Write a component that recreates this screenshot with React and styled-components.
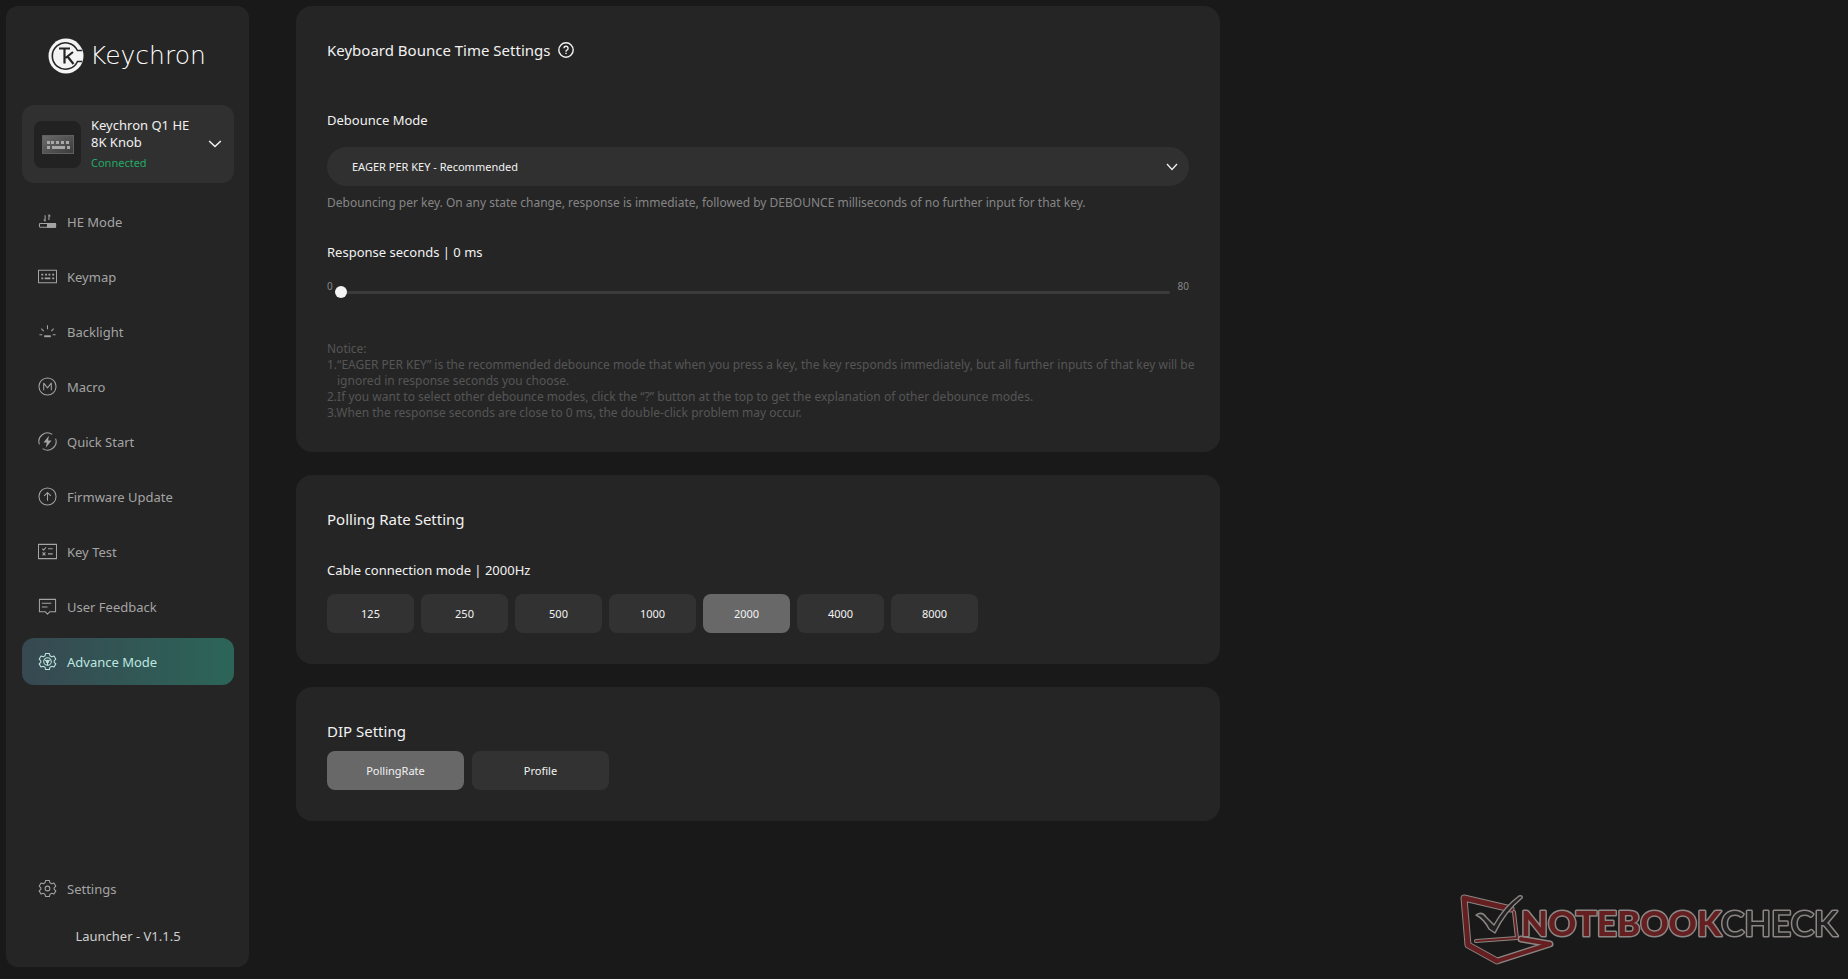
import React, { useState } from "react";
import styled, { createGlobalStyle, css } from "styled-components";

const GlobalStyle = createGlobalStyle`
  * { box-sizing: border-box; }
  body {
    margin: 0;
    background: #191919;
    color: #f2f2f2;
    font-family: "Noto Sans", "Open Sans", sans-serif;
    font-size: 14px;
    line-height: 20px;
  }
  button, select, input { font-family: inherit; }
  h2, p, ul, ol { margin: 0; padding: 0; font-weight: 400; }
`;

const Page = styled.div`
  display: flex;
  align-items: flex-start;
  min-height: 100vh;
  padding: 6px 6px 12px;
`;

const Sidebar = styled.aside`
  display: flex;
  flex-direction: column;
  flex: none;
  width: 243px;
  min-height: calc(100vh - 18px);
  padding: 0 15px 21px 16px;
  border-radius: 12px;
  background: #252525;
`;

const Brand = styled.a`
  display: flex;
  align-items: center;
  gap: 6px;
  height: 99px;
  padding-left: 26px;
  color: #ffffff;
  text-decoration: none;
`;

const Wordmark = styled.span`
  font: 200 25px/32px "DejaVu Sans", sans-serif;
`;

const Device = styled.button`
  display: flex;
  align-items: center;
  gap: 10px;
  height: 78px;
  padding: 0 12px;
  border: 0;
  border-radius: 12px;
  background: #303030;
  color: #f0f0f0;
  text-align: left;
`;

const Thumb = styled.span`
  display: flex;
  align-items: center;
  justify-content: center;
  flex: none;
  width: 47px;
  height: 47px;
  border-radius: 8px;
  background: #222222;
`;

const DeviceText = styled.span`
  display: flex;
  flex-direction: column;
  flex: 1;
  gap: 4px;
  font-size: 13px;
  line-height: 17px;
`;

const Status = styled.span`
  color: #22ab64;
  font-size: 11px;
  line-height: 16px;
`;

const Nav = styled.nav`
  display: flex;
  flex-direction: column;
  gap: 8px;
  flex: 1;
  margin-top: 15px;
`;

const NavLink = styled.a`
  display: flex;
  align-items: center;
  gap: 10px;
  height: 47px;
  padding-left: 16px;
  border-radius: 12px;
  color: #a4a4a4;
  font-size: 13px;
  text-decoration: none;
  ${(p) => p.$bottom && css`margin-top: auto;`}
  ${(p) => p.$active && css`
    background: linear-gradient(90deg, #374851, #2c6558);
    color: #bfe6e0;
  `}
`;

const Version = styled.p`
  margin-top: 14px;
  color: #cfcfcf;
  font-size: 13px;
  text-align: center;
`;

const Main = styled.main`
  display: flex;
  flex-direction: column;
  gap: 23px;
  width: 50vw;
  margin-left: 47px;
`;

const Card = styled.section`
  display: flex;
  flex-direction: column;
  padding: 32px 31px 31px;
  border-radius: 16px;
  background: #252525;
`;

const CardHead = styled.div`
  display: flex;
  align-items: center;
  gap: 8px;
  margin-bottom: ${(p) => p.$space}px;
`;

const Title = styled.h2`
  font-size: 15px;
  line-height: 24px;
`;

const HelpButton = styled.button`
  display: flex;
  padding: 0;
  border: 0;
  background: none;
  color: #f2f2f2;
`;

const Label = styled.label`
  font-size: 13px;
  line-height: 20px;
`;

const SelectBox = styled.div`
  display: grid;
  align-items: center;
  margin: 17px 0 9px;
  > * { grid-area: 1 / 1; }
  > svg { justify-self: end; margin-right: 11px; pointer-events: none; }
`;

const Select = styled.select`
  appearance: none;
  width: 100%;
  height: 39px;
  padding: 0 40px 0 25px;
  border: 0;
  border-radius: 20px;
  background: #303030;
  color: #f2f2f2;
  font-size: 11px;
`;

const Hint = styled.p`
  margin-bottom: 31px;
  color: #858585;
  font-size: 12px;
  line-height: 16px;
`;

const SliderRow = styled.div`
  display: flex;
  align-items: flex-start;
  gap: 2px;
  margin: 18px 0 37px;
  color: #858585;
  font-size: 10px;
  line-height: 12px;
`;

const SliderMax = styled.span`
  margin-left: 6px;
`;

const Slider = styled.input`
  appearance: none;
  flex: 1;
  min-width: 0;
  height: 24px;
  margin: 0;
  background: none;
  &::-webkit-slider-runnable-track {
    height: 3px;
    border-radius: 2px;
    background: #3b3b3b;
  }
  &::-webkit-slider-thumb {
    appearance: none;
    width: 12px;
    height: 12px;
    margin-top: -5px;
    border-radius: 50%;
    background: #f4f4f4;
  }
`;

const Notice = styled.div`
  margin-right: -16px;
  color: #555555;
  font-size: 12px;
  line-height: 16px;
`;

const NoticeItem = styled.p`
  padding-left: 10px;
  text-indent: -10px;
`;

const Options = styled.div`
  display: flex;
  flex-wrap: wrap;
  gap: ${(p) => p.$gap}px;
  margin-top: ${(p) => p.$space}px;
`;

const Option = styled.button`
  width: ${(p) => (p.$wide ? 137 : 87)}px;
  height: 39px;
  padding: 0;
  border: 0;
  border-radius: 8px;
  background: ${(p) => (p.$active ? "#686868" : "#323232")};
  color: #f2f2f2;
  font-size: 11px;
`;

const Watermark = styled.svg`
  position: fixed;
  right: 1px;
  bottom: 7px;
  font-family: Lato, sans-serif;
  font-size: 35px;
`;

const gear =
  "M8 1.5h4l.6 2.5 1.8 1 2.4-.8 2 3.4-1.8 1.7v1.5l1.8 1.7-2 3.4-2.4-.8-1.8 1-.6 2.4H8l-.6-2.4-1.8-1-2.4.8-2-3.4L3 10.8V9.300L1.200 7.600l2-3.400 2.400.8 1.800-1z";

const icons = {
  he: (
    <>
      <rect x="1.500" y="12" width="17" height="4" rx="1" />
      <path d="M10 12h8.500v4H10z" fill="currentColor" />
      <path d="M7.500 3.500v6L6 8M11.500 8.500V3L13 4.500" />
    </>
  ),
  keymap: (
    <>
      <path d="M.5 3.500h19v13H.5z" />
      <path d="M3.500 8h2m2 0h2m1.500 0h2m2 0h2M3.500 12h2m1.500 0h6m2 0h2" strokeWidth="2" />
    </>
  ),
  backlight: (
    <>
      <path d="M10 3.500v4M3.500 7l2.500 2.500M16.500 7L14 9.500M1.500 13.500h3M15.500 13.500h3" />
      <path d="M6.500 15h7" strokeWidth="2" />
    </>
  ),
  macro: (
    <>
      <circle cx="10" cy="10" r="9" />
      <path d="M6 14V6.500l4 5 4-5V14" />
    </>
  ),
  quick: (
    <>
      <path d="M1.500 13A9 9 0 0 1 15 2.500M18.500 7A9 9 0 0 1 5 17.500" />
      <path d="M11.500 4L5.800 11h3.400l-1 5.500L14.200 9h-3.600z" fill="currentColor" stroke="none" />
    </>
  ),
  firmware: (
    <>
      <circle cx="10" cy="10" r="9" />
      <path d="M10 14.500V6M6.500 9.300L10 5.800l3.500 3.500" />
    </>
  ),
  test: (
    <>
      <path d="M.5 2.500h19v15H.5z" />
      <path d="M4.500 7l1.500 1.500 2.500-3M10.500 7h5M4.800 11l3 3M7.800 11l-3 3M10.500 12.500h5" />
    </>
  ),
  feedback: (
    <path d="M1.500 2.500h17v13h-6L10 18l-2.500-2.500h-6zM4 6.500h10M4 10.500h6" />
  ),
  advance: (
    <>
      <path d={gear} />
      <circle cx="10" cy="10" r="4" />
      <path d="M10 14v-4M6.800 8L10 10l3.200-2" />
      <circle cx="10" cy="10" r="1.200" />
    </>
  ),
  settings: (
    <>
      <path d={gear} />
      <circle cx="10" cy="10" r="2.500" />
    </>
  ),
};

const Icon = ({ name }) => (
  <svg width="19" height="19" viewBox="0 0 20 20" fill="none" stroke="currentColor" strokeWidth="1.100" strokeLinejoin="round" aria-hidden="true">
    {icons[name]}
  </svg>
);

const Chevron = ({ width, height }) => (
  <svg width={width} height={height} viewBox="0 0 12 8" preserveAspectRatio="none" fill="none" stroke="#eeeeee" strokeWidth="1.300" aria-hidden="true">
    <path d="M1 1l5 5.500L11 1" />
  </svg>
);

const BrandMark = () => (
  <svg width="36" height="36" viewBox="0 0 36 36" aria-hidden="true">
    <circle cx="18" cy="18" r="17.500" fill="#f4f4f4" />
    <path d="M34 12.500h-4.500A13.200 13.200 0 1 0 29.500 23.500H34" fill="none" stroke="#252525" strokeWidth="1.600" />
    <path d="M11 10.500h11M16.500 10.500v15M25 14l-7.500 6M19.500 18.500l6 7.500" fill="none" stroke="#252525" strokeWidth="2.200" />
  </svg>
);

const KeyboardPicture = () => (
  <svg width="32" height="19" viewBox="0 0 32 19" aria-hidden="true">
    <defs>
      <linearGradient id="case" x1="0" x2="1" y1="0" y2="1">
        <stop offset="0" stopColor="#6c6c6c" />
        <stop offset="1" stopColor="#3a3a3a" />
      </linearGradient>
    </defs>
    <rect x=".5" y=".5" width="31" height="18" fill="url(#case)" stroke="#606060" />
    <path d="M5 7.500h3m1 0h3m2 0h3m2 0h3m2 0h3M5 12.500h3m2 0h13m2 0h3" stroke="#a8a8a8" strokeWidth="3" />
  </svg>
);

const NotebookcheckMark = () => (
  <Watermark width="388" height="84" viewBox="0 0 388 84" role="img" aria-label="Notebookcheck">
    <g strokeLinejoin="round" strokeLinecap="round" fill="none">
      <g stroke="#8b8683">
        <path d="M52 21L5 10l4 47 29 16 53-17-29-5" strokeWidth="7" />
        <path d="M55 24l3 26-41 3" strokeWidth="4" />
      </g>
      <g stroke="#651f20">
        <path d="M52 21L5 10l4 47 29 16" strokeWidth="5" />
        <path d="M38 73l53-17-29-5" strokeWidth="4" />
        <path d="M55 24l3 26-41 3" strokeWidth="2" />
      </g>
      <path d="M17 27q6-4 10 2l8 8q10-18 25-29 4-1 3 2-17 14-27 35l-6-4q-5-10-13-14z" fill="#222122" stroke="#8b8683" strokeWidth="1.500" />
    </g>
    <g paintOrder="stroke" stroke="#8b8683" strokeWidth="3" strokeLinejoin="round">
      <text x="62" y="48" fill="#651f20" fontWeight="900">NOTEBOOK</text>
      <text x="262" y="48" fill="#222122" fontWeight="600">CHECK</text>
    </g>
  </Watermark>
);

const links = [
  ["he", "HE Mode"],
  ["keymap", "Keymap"],
  ["backlight", "Backlight"],
  ["macro", "Macro"],
  ["quick", "Quick Start"],
  ["firmware", "Firmware Update"],
  ["test", "Key Test"],
  ["feedback", "User Feedback"],
  ["advance", "Advance Mode"],
];

const rates = [125, 250, 500, 1000, 2000, 4000, 8000];
const dips = ["PollingRate", "Profile"];

export default function App() {
  const [delay, setDelay] = useState(0);
  const [rate, setRate] = useState(2000);
  const [dip, setDip] = useState("PollingRate");

  return (
    <>
      <GlobalStyle />
      <Page>
        <Sidebar>
          <Brand href="#home">
            <BrandMark />
            <Wordmark>Keychron</Wordmark>
          </Brand>
          <Device type="button">
            <Thumb><KeyboardPicture /></Thumb>
            <DeviceText>
              <span>Keychron Q1 HE<br />8K Knob</span>
              <Status>Connected</Status>
            </DeviceText>
            <Chevron width={14} height={8} />
          </Device>
          <Nav>
            {links.map(([id, text]) => (
              <NavLink key={id} href={`#${id}`} $active={id === "advance"}>
                <Icon name={id} />
                {text}
              </NavLink>
            ))}
            <NavLink href="#settings" $bottom>
              <Icon name="settings" />
              Settings
            </NavLink>
          </Nav>
          <Version>Launcher - V1.1.5</Version>
        </Sidebar>

        <Main>
          <Card>
            <CardHead $space={48}>
              <Title>Keyboard Bounce Time Settings</Title>
              <HelpButton type="button" aria-label="Explain debounce modes">
                <svg width="16" height="16" viewBox="0 0 16 16" fill="none" stroke="currentColor" strokeWidth="1.400">
                  <circle cx="8" cy="8" r="7.200" />
                  <path d="M5.900 6.300a2.100 2.100 0 1 1 3 1.900q-.9.400-.9 1.500M8 10.700v1.400" />
                </svg>
              </HelpButton>
            </CardHead>
            <Label htmlFor="mode">Debounce Mode</Label>
            <SelectBox>
              <Select id="mode">
                <option>EAGER PER KEY - Recommended</option>
              </Select>
              <Chevron width={12} height={8} />
            </SelectBox>
            <Hint>
              Debouncing per key. On any state change, response is immediate, followed by DEBOUNCE milliseconds of no further input for that key.
            </Hint>
            <Label htmlFor="delay">Response seconds | {delay} ms</Label>
            <SliderRow>
              <span>0</span>
              <Slider id="delay" type="range" min="0" max="80" value={delay} onChange={(e) => setDelay(Number(e.target.value))} />
              <SliderMax>80</SliderMax>
            </SliderRow>
            <Notice>
              <p>Notice:</p>
              <NoticeItem>
                1.“EAGER PER KEY” is the recommended debounce mode that when you press a key, the key responds immediately, but all further inputs of that key will be ignored in response seconds you choose.
              </NoticeItem>
              <NoticeItem>
                2.If you want to select other debounce modes, click the “?” button at the top to get the explanation of other debounce modes.
              </NoticeItem>
              <NoticeItem>
                3.When the response seconds are close to 0 ms, the double-click problem may occur.
              </NoticeItem>
            </Notice>
          </Card>

          <Card>
            <CardHead $space={29}>
              <Title>Polling Rate Setting</Title>
            </CardHead>
            <Label as="p" id="rate-label">Cable connection mode | {rate}Hz</Label>
            <Options role="group" aria-labelledby="rate-label" $gap={7} $space={14}>
              {rates.map((value) => (
                <Option key={value} type="button" $active={value === rate} aria-pressed={value === rate} onClick={() => setRate(value)}>
                  {value}
                </Option>
              ))}
            </Options>
          </Card>

          <Card>
            <Title id="dip-label">DIP Setting</Title>
            <Options role="group" aria-labelledby="dip-label" $gap={8} $space={8}>
              {dips.map((value) => (
                <Option key={value} type="button" $wide $active={value === dip} aria-pressed={value === dip} onClick={() => setDip(value)}>
                  {value}
                </Option>
              ))}
            </Options>
          </Card>
        </Main>
        <NotebookcheckMark />
      </Page>
    </>
  );
}
